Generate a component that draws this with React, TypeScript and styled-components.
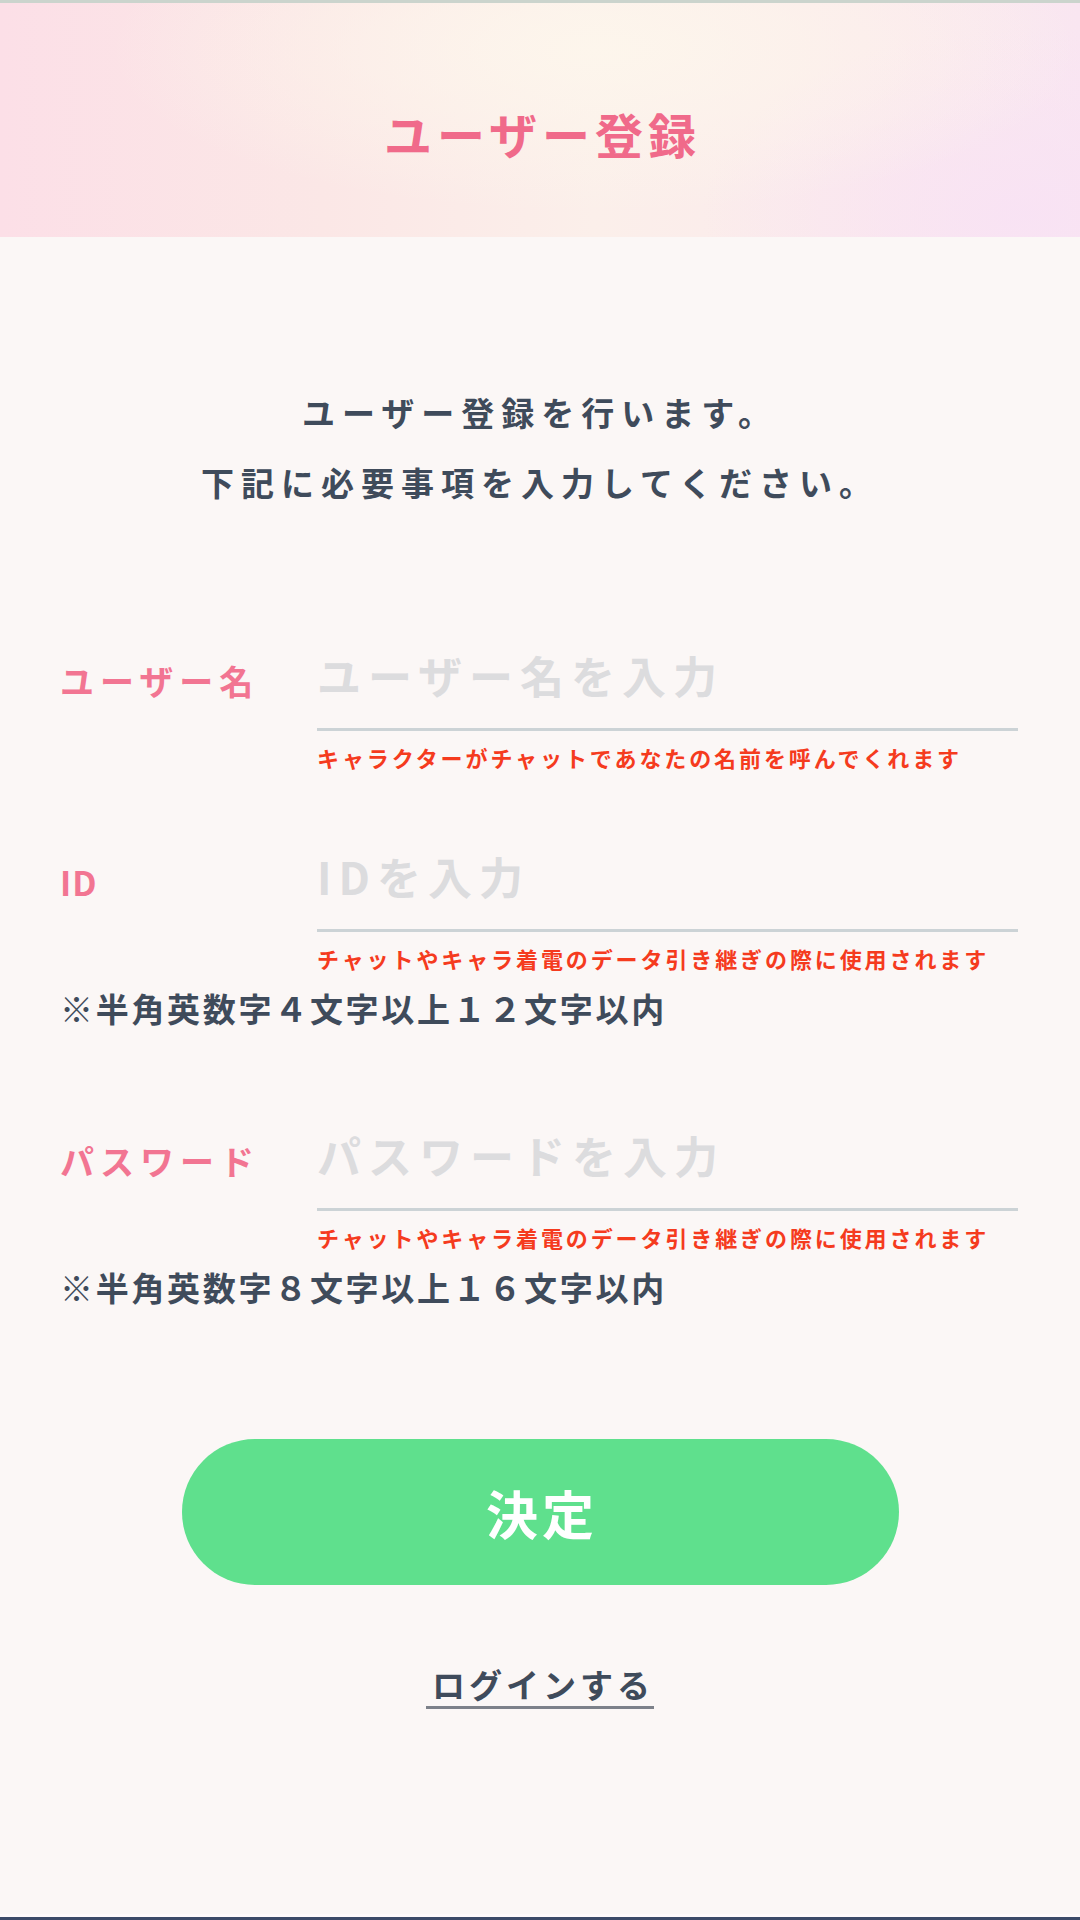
import React from "react";
import styled, { createGlobalStyle } from "styled-components";

const GlobalStyle = createGlobalStyle`
  html, body {
    margin: 0;
    padding: 0;
    background: #fbf7f6;
  }
  body {
    font-family: "Noto Sans CJK JP", "Noto Sans", sans-serif;
    -webkit-font-smoothing: antialiased;
  }
  * { box-sizing: border-box; }
`;

const Page = styled.div`
  width: 1080px;
  height: 1920px;
  display: flex;
  flex-direction: column;
  background: #fbf7f6;
  overflow: hidden;
`;

const Header = styled.header`
  height: 237px;
  flex-shrink: 0;
  border-top: 3px solid #cbd4cd;
  padding-top: 26px;
  display: flex;
  align-items: center;
  justify-content: center;
  background:
    radial-gradient(ellipse 45% 70% at 55% 20%, rgba(253, 246, 236, 0.95), rgba(253, 246, 236, 0) 100%),
    radial-gradient(ellipse 30% 80% at 95% 90%, rgba(248, 226, 244, 0.9), rgba(248, 226, 244, 0) 100%),
    linear-gradient(90deg, #fcdfe7 0%, #fbe7e6 30%, #fbefea 55%, #fbeaec 80%, #f9e6f1 100%);
`;

const Title = styled.h1`
  margin: 0;
  padding-left: 5px;
  font-size: 48px;
  font-weight: 700;
  letter-spacing: 5px;
  color: #f06a8a;
  line-height: 1;
`;

const Main = styled.main`
  flex: 1;
  display: flex;
  flex-direction: column;
`;

const Intro = styled.p`
  margin: 140px 0 0;
  text-align: center;
  font-size: 33px;
  font-weight: 700;
  letter-spacing: 7px;
  line-height: 70px;
  color: #3f4b5b;
`;

const Form = styled.form`
  margin-top: 114px;
  display: flex;
  flex-direction: column;
  gap: 60px;
  padding: 0 62px 0 60px;
`;

const Section = styled.div`
  display: flex;
  flex-direction: column;
`;

const FieldRow = styled.div`
  display: grid;
  grid-template-columns: 257px 1fr;
  align-items: start;
`;

const Label = styled.label<{ $latin?: boolean }>`
  line-height: 100px;
  padding-bottom: 4px;
  font-size: 34px;
  font-weight: 700;
  letter-spacing: ${(p) => (p.$latin ? "1px" : "6px")};
  color: #f27592;
  white-space: nowrap;
`;

const FieldBody = styled.div`
  display: flex;
  flex-direction: column;
`;

const Input = styled.input`
  height: 100px;
  width: 100%;
  padding: 0 0 10px;
  border: none;
  border-bottom: 3px solid #ccd3d6;
  background: transparent;
  outline: none;
  font-family: "Noto Sans CJK JP", "Noto Sans", sans-serif;
  font-size: 44px;
  font-weight: 700;
  letter-spacing: 7px;
  color: #3f4b5b;
  &::placeholder {
    color: #dcdcde;
  }
`;

const Note = styled.p`
  margin: 11px 0 0;
  font-size: 22px;
  font-weight: 700;
  letter-spacing: 2.9px;
  line-height: 30px;
  color: #f53b1e;
  white-space: nowrap;
`;

const Rule = styled.p`
  margin: 15px 0 0;
  padding-bottom: 23px;
  font-size: 33px;
  font-weight: 700;
  letter-spacing: 2.7px;
  line-height: 40px;
  color: #3f4b5b;
  white-space: nowrap;
`;

const Actions = styled.div`
  margin-top: 109px;
  display: flex;
  flex-direction: column;
  align-items: center;
`;

const SubmitButton = styled.button`
  width: 717px;
  height: 146px;
  border: none;
  border-radius: 73px;
  background: #5fe08d;
  color: #ffffff;
  font-family: "Noto Sans CJK JP", "Noto Sans", sans-serif;
  font-size: 52px;
  font-weight: 700;
  letter-spacing: 4px;
  padding: 0 0 0 4px;
  cursor: pointer;
`;

const LoginLink = styled.a`
  margin-top: 81px;
  display: inline-block;
  padding: 0 0 4px 6px;
  border-bottom: 3px solid #7d818a;
  font-size: 33px;
  font-weight: 700;
  letter-spacing: 4px;
  line-height: 36px;
  color: #3f4b5b;
  text-decoration: none;
`;

const BottomBar = styled.div`
  flex-shrink: 0;
  height: 6px;
  border-top: 3px solid #fffafb;
  background: #3c4a68;
`;

type FieldProps = {
  label: string;
  placeholder: string;
  note: string;
  rule?: string;
  type?: string;
  latin?: boolean;
};

const Field: React.FC<FieldProps> = ({ label, placeholder, note, rule, type = "text", latin }) => (
  <Section>
    <FieldRow>
      <Label $latin={latin}>{label}</Label>
      <FieldBody>
        <Input type={type} placeholder={placeholder} />
        <Note>{note}</Note>
      </FieldBody>
    </FieldRow>
    {rule && <Rule>{rule}</Rule>}
  </Section>
);

export default function App() {
  return (
    <>
      <GlobalStyle />
      <Page>
        <Header>
          <Title>ユーザー登録</Title>
        </Header>
        <Main>
          <Intro>
            ユーザー登録を行います。
            <br />
            下記に必要事項を入力してください。
          </Intro>
          <Form onSubmit={(e) => e.preventDefault()}>
            <Field
              label="ユーザー名"
              placeholder="ユーザー名を入力"
              note="キャラクターがチャットであなたの名前を呼んでくれます"
            />
            <Field
              label="ID"
              latin
              placeholder="IDを入力"
              note="チャットやキャラ着電のデータ引き継ぎの際に使用されます"
              rule="※半角英数字４文字以上１２文字以内"
            />
            <Field
              label="パスワード"
              placeholder="パスワードを入力"
              type="password"
              note="チャットやキャラ着電のデータ引き継ぎの際に使用されます"
              rule="※半角英数字８文字以上１６文字以内"
            />
          </Form>
          <Actions>
            <SubmitButton type="button">決定</SubmitButton>
            <LoginLink href="#">ログインする</LoginLink>
          </Actions>
        </Main>
        <BottomBar />
      </Page>
    </>
  );
}
